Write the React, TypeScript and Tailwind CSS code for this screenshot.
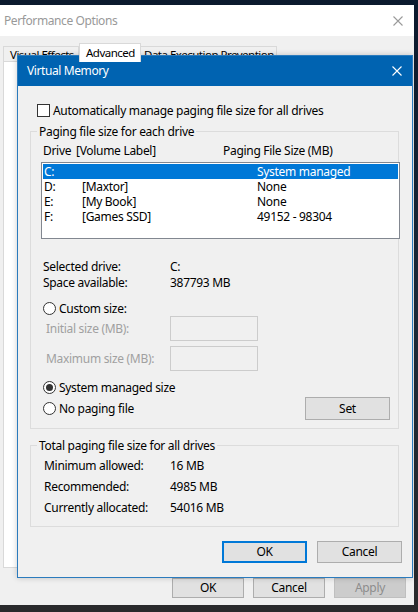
import React from "react";

function XIcon({ color, className }: { color: string; className?: string }) {
  return (
    <svg width="10" height="10" viewBox="0 0 10 10" className={className}>
      <path d="M0.5 0.5 L9.5 9.5 M9.5 0.5 L0.5 9.5" stroke={color} strokeWidth="1.1" fill="none" />
    </svg>
  );
}

function Radio({ checked }: { checked?: boolean }) {
  return (
    <span className="w-[13px] h-[13px] rounded-full border border-[#333333] bg-white flex items-center justify-center shrink-0">
      {checked && <span className="w-[7px] h-[7px] rounded-full bg-[#333333]" />}
    </span>
  );
}

function OuterWindow() {
  return (
    <div className="w-[414px] h-[600px] bg-[#f0f0f0] flex flex-col">
      <div className="h-[31px] bg-white flex items-center justify-between pl-[4px] pr-[11px] shrink-0">
        <span className="text-[12px] tracking-[-0.4px] text-[#999999]">Performance Options</span>
        <XIcon color="#9a9a9a" />
      </div>
      <div className="flex flex-col px-[3px] pt-[7px]">
        <div className="flex items-end h-[18px] text-[11.5px] tracking-[-0.5px]">
          <div className="w-[76px] h-[15px] border border-b-0 border-[#d9d9d9] pl-[6px] leading-[15px] whitespace-nowrap">
            Visual Effects
          </div>
          <div className="w-[62px] h-[19px] bg-white border border-b-0 border-[#d9d9d9] pl-[6px] leading-[17px] -mb-px relative z-10 whitespace-nowrap">
            Advanced
          </div>
          <div className="w-[136px] h-[15px] border border-b-0 border-l-0 border-[#d9d9d9] pl-[3px] leading-[15px] whitespace-nowrap">
            Data Execution Prevention
          </div>
        </div>
        <div className="w-[406px] h-[507px] bg-white border border-[#d9d9d9]" />
        <div className="flex justify-end gap-[9px] mt-[10px] pr-[5px]">
          <button className="w-[72px] h-[20px] bg-[#e1e1e1] border border-[#adadad] leading-[18px]">OK</button>
          <button className="w-[72px] h-[20px] bg-[#e1e1e1] border border-[#adadad] leading-[18px]">Cancel</button>
          <button className="w-[72px] h-[20px] bg-[#cccccc] border border-[#bfbfbf] text-[#8c8c8c] leading-[18px]">Apply</button>
        </div>
      </div>
    </div>
  );
}

const drives = [
  { d: "C:", label: "", size: "System managed", sel: true },
  { d: "D:", label: "[Maxtor]", size: "None" },
  { d: "E:", label: "[My Book]", size: "None" },
  { d: "F:", label: "[Games SSD]", size: "49152 - 98304" },
];

function VirtualMemory() {
  return (
    <div className="absolute left-[17px] top-[55px] w-[396px] h-[523px] border border-[#2b7bbd] bg-[#f0f0f0] flex flex-col shadow-[0_0_6px_rgba(0,0,0,0.2)]">
      <div className="h-[30px] bg-[#0063b1] flex items-center justify-between pl-[9px] pr-[10px] text-white shrink-0">
        <span className="text-[12px] tracking-[-0.4px]">Virtual Memory</span>
        <XIcon color="#ffffff" />
      </div>
      <div className="flex flex-col">
        <div className="flex items-center gap-[3px] mt-[18px] pl-[19px] h-[13px]">
          <span className="w-[13px] h-[13px] border border-[#333333] bg-white shrink-0" />
          <span className="whitespace-nowrap">Automatically manage paging file size for all drives</span>
        </div>

        <fieldset className="mt-[7px] ml-[12px] w-[369px] border border-[#dcdcdc] pb-[8px]">
          <legend className="ml-[6px] px-[2px] leading-[15px]">Paging file size for each drive</legend>
          <div className="flex h-[15px] leading-[15px] items-center mt-[4px] pl-[12px]">
            <span className="w-[33px]">Drive</span>
            <span className="w-[147px]">[Volume Label]</span>
            <span>Paging File Size (MB)</span>
          </div>
          <div className="mt-[4px] ml-[10px] mr-[-2px] h-[77px] bg-white border border-[#828790] pt-[1px] px-[1px]">
            {drives.map((r) => (
              <div
                key={r.d}
                className={
                  "flex h-[15px] leading-[15px] items-center pl-[1px] " +
                  (r.sel ? "bg-[#0078d7] text-white" : "")
                }
              >
                <span className="w-[38px]">{r.d}</span>
                <span className="w-[175px]">{r.label}</span>
                <span>{r.size}</span>
              </div>
            ))}
          </div>

          <div className="mt-[20px] pl-[12px]">
            <div className="flex h-[16px] leading-[16px] items-center">
              <span className="w-[127px]">Selected drive:</span>
              <span>C:</span>
            </div>
            <div className="flex h-[16px] leading-[16px] items-center">
              <span className="w-[127px]">Space available:</span>
              <span>387793 MB</span>
            </div>
          </div>

          <div className="flex items-center gap-[3px] h-[15px] leading-[15px] mt-[10px] pl-[12px]">
            <Radio />
            <span>Custom size:</span>
          </div>
          <div className="flex items-center h-[25px] pl-[15px]">
            <span className="w-[124px] text-[#a0a0a0]">Initial size (MB):</span>
            <span className="w-[88px] h-[25px] border border-[#cccccc] bg-[#f0f0f0]" />
          </div>
          <div className="flex items-center h-[25px] mt-[5px] pl-[15px]">
            <span className="w-[124px] text-[#a0a0a0]">Maximum size (MB):</span>
            <span className="w-[88px] h-[25px] border border-[#cccccc] bg-[#f0f0f0]" />
          </div>
          <div className="flex items-center gap-[3px] h-[15px] leading-[15px] mt-[9px] pl-[12px]">
            <Radio checked />
            <span>System managed size</span>
          </div>
          <div className="flex items-center justify-between h-[23px] mt-[2px] pl-[12px] pr-[8px]">
            <div className="flex items-center gap-[3px]">
              <Radio />
              <span>No paging file</span>
            </div>
            <button className="w-[85px] h-[23px] bg-[#e1e1e1] border border-[#adadad]">Set</button>
          </div>
        </fieldset>

        <fieldset className="mt-[9px] ml-[12px] w-[369px] border border-[#dcdcdc] pb-[8px]">
          <legend className="ml-[6px] px-[2px] leading-[15px]">Total paging file size for all drives</legend>
          <div className="mt-[2px] pl-[13px]">
            <div className="flex h-[21px] items-center">
              <span className="w-[126px]">Minimum allowed:</span>
              <span>16 MB</span>
            </div>
            <div className="flex h-[21px] items-center">
              <span className="w-[126px]">Recommended:</span>
              <span>4985 MB</span>
            </div>
            <div className="flex h-[21px] items-center">
              <span className="w-[126px]">Currently allocated:</span>
              <span>54016 MB</span>
            </div>
          </div>
        </fieldset>

        <div className="flex justify-end gap-[10px] mt-[14px] pr-[10px]">
          <button className="w-[85px] h-[22px] bg-[#e1e1e1] border-2 border-[#0078d7]">OK</button>
          <button className="w-[85px] h-[22px] bg-[#e1e1e1] border border-[#adadad]">Cancel</button>
        </div>
      </div>
    </div>
  );
}

export default function App() {
  return (
    <div className="relative w-[418px] h-[612px] overflow-hidden bg-[linear-gradient(180deg,#0b1a2e_0%,#1b2a3a_50%,#2a2a2c_100%)] font-['Noto_Sans',sans-serif] text-[12px] tracking-[-0.3px] text-black">
      <div className="pt-[5px]">
        <OuterWindow />
      </div>
      <VirtualMemory />
    </div>
  );
}
